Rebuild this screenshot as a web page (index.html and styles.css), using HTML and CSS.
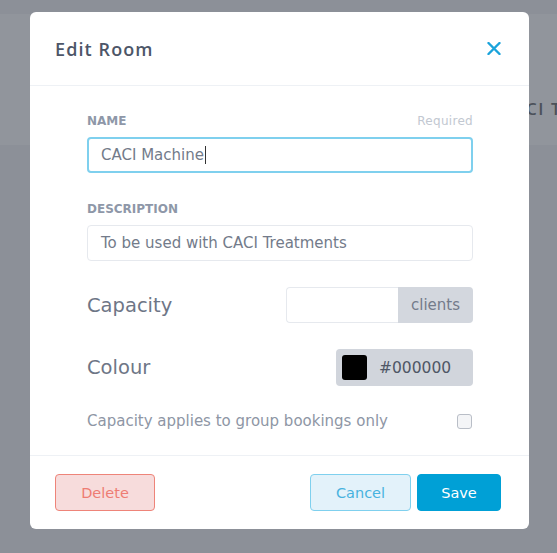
FILE: index.html
```html
<!DOCTYPE html>
<html lang="en">
<head>
  <meta charset="UTF-8" />
  <meta name="viewport" content="width=device-width, initial-scale=1.0"/>
  <title>Edit Room</title>
  <link rel="stylesheet" href="styles.css">
</head>
<body>
  <!-- page behind the overlay -->
  <div class="page-band">
    <h1 class="page-title">CACI Treatments</h1>
  </div>

  <div class="modal">
    <div class="modal-header">
      <h2>Edit Room</h2>
      <button class="close" type="button" aria-label="Close">
        <svg width="14" height="13" viewBox="0 0 14 13">
          <path d="M1.5 1 L12.5 12 M12.5 1 L1.5 12" stroke="#1aa3db" stroke-width="2.4" stroke-linecap="round" fill="none"/>
        </svg>
      </button>
    </div>

    <form class="modal-body">
      <div class="field-label">
        <span>NAME</span>
        <span class="hint">Required</span>
      </div>
      <div class="text-input focused">CACI Machine<span class="caret"></span></div>

      <div class="field-label spaced">
        <span>DESCRIPTION</span>
      </div>
      <div class="text-input">To be used with CACI Treatments</div>

      <div class="row">
        <label>Capacity</label>
        <div class="input-group">
          <div class="group-input"></div>
          <div class="addon">clients</div>
        </div>
      </div>

      <div class="row">
        <label>Colour</label>
        <div class="colour-box">
          <span class="swatch"></span>
          <span>#000000</span>
        </div>
      </div>

      <div class="check-row">
        <span>Capacity applies to group bookings only</span>
        <span class="checkbox"></span>
      </div>
    </form>

    <div class="modal-footer">
      <button type="button" class="btn btn-delete">Delete</button>
      <div class="actions">
        <button type="button" class="btn btn-cancel">Cancel</button>
        <button type="submit" class="btn btn-save">Save</button>
      </div>
    </div>
  </div>
</body>
</html>
```

FILE: styles.css
```css
body {
  margin: 0;
  height: 553px;
  overflow: hidden;
  background: #8c9098;
  font-family: "DejaVu Sans", Arial, sans-serif;
  position: relative;
}
.page-band {
  margin-top: 14px;
  height: 131px;
  background: #91959c;
  padding-left: 501px;
  overflow: hidden;
}
.page-title {
  margin: 0;
  margin-top: 85px;
  font-family: "Open Sans", Arial, sans-serif;
  font-size: 17px;
  font-weight: 600;
  color: #4c515a;
  letter-spacing: 1.5px;
  line-height: 20px;
  white-space: nowrap;
}
.modal {
  position: absolute;
  left: 30px;
  top: 12px;
  width: 499px;
  height: 517px;
  background: #fff;
  border-radius: 6px;
  display: flex;
  flex-direction: column;
}
.modal-header {
  height: 74px;
  box-sizing: border-box;
  padding: 0 28px 0 25px;
  display: flex;
  align-items: center;
  justify-content: space-between;
  border-bottom: 1px solid #eef1f5;
}
.modal-header h2 {
  margin: 0;
  font-family: "Open Sans", Arial, sans-serif;
  font-size: 18px;
  font-weight: 600;
  color: #4d5668;
  letter-spacing: 1.1px;
}
.close {
  border: none;
  background: none;
  padding: 0;
  width: 14px;
  height: 13px;
  display: flex;
}
.modal-body {
  flex: 1;
  padding: 27px 56px 0 57px;
  margin: 0;
}
.field-label {
  display: flex;
  justify-content: space-between;
  height: 14px;
  line-height: 17px;
  font-size: 12px;
  font-weight: 700;
  color: #8e97a8;
  margin-bottom: 10px;
}
.field-label.spaced {
  margin-top: 28px;
}
.field-label .hint {
  font-weight: 400;
  color: #c2c8d1;
  letter-spacing: 0.3px;
}
.text-input {
  height: 36px;
  box-sizing: border-box;
  border: 1px solid #e6e9ee;
  border-radius: 4px;
  padding: 0 13px;
  display: flex;
  align-items: center;
  font-size: 15px;
  color: #737b8a;
}
.text-input.focused {
  border: 2px solid #7fd0ee;
  padding: 0 12px;
}
.caret {
  display: inline-block;
  width: 1px;
  height: 18px;
  background: #333;
  margin-left: 1px;
}
.row {
  display: flex;
  justify-content: space-between;
  align-items: center;
  margin-top: 26px;
}
.row label {
  font-size: 19.5px;
  color: #6e7686;
}
.input-group {
  display: flex;
  width: 187px;
  height: 36px;
}
.group-input {
  flex: 1;
  border: 1px solid #e6e9ee;
  border-right: none;
  border-radius: 4px 0 0 4px;
}
.addon {
  width: 75px;
  background: #d3d7de;
  border-radius: 0 4px 4px 0;
  display: flex;
  align-items: center;
  justify-content: center;
  font-size: 15px;
  color: #737b8a;
}
.colour-box {
  width: 137px;
  height: 37px;
  box-sizing: border-box;
  background: #d1d5dc;
  border-radius: 4px;
  display: flex;
  align-items: center;
  gap: 12px;
  padding-left: 6px;
  font-size: 15.5px;
  color: #4f5766;
}
.swatch {
  width: 25px;
  height: 25px;
  background: #000;
  border-radius: 3px;
}
.check-row {
  display: flex;
  justify-content: space-between;
  align-items: center;
  margin-top: 26px;
  font-size: 15px;
  color: #8e96a5;
}
.checkbox {
  width: 13px;
  height: 13px;
  border: 1px solid #b9bec7;
  border-radius: 3px;
  background: #f4f5f7;
  margin-right: 1px;
}
.modal-footer {
  height: 74px;
  box-sizing: border-box;
  border-top: 1px solid #eef1f5;
  padding: 0 28px 0 25px;
  display: flex;
  align-items: center;
  justify-content: space-between;
}
.actions {
  display: flex;
  gap: 6px;
}
.btn {
  height: 37px;
  border-radius: 4px;
  font-family: "DejaVu Sans", Arial, sans-serif;
  font-size: 14.5px;
  cursor: pointer;
}
.btn-delete {
  width: 100px;
  background: #f7dcdc;
  border: 1px solid #ee8479;
  color: #ee7c73;
}
.btn-cancel {
  width: 101px;
  background: #e3f2fa;
  border: 1px solid #7fd0ee;
  color: #47b2df;
}
.btn-save {
  width: 84px;
  background: #00a0d6;
  border: 1px solid #00a0d6;
  color: #fff;
}
```
